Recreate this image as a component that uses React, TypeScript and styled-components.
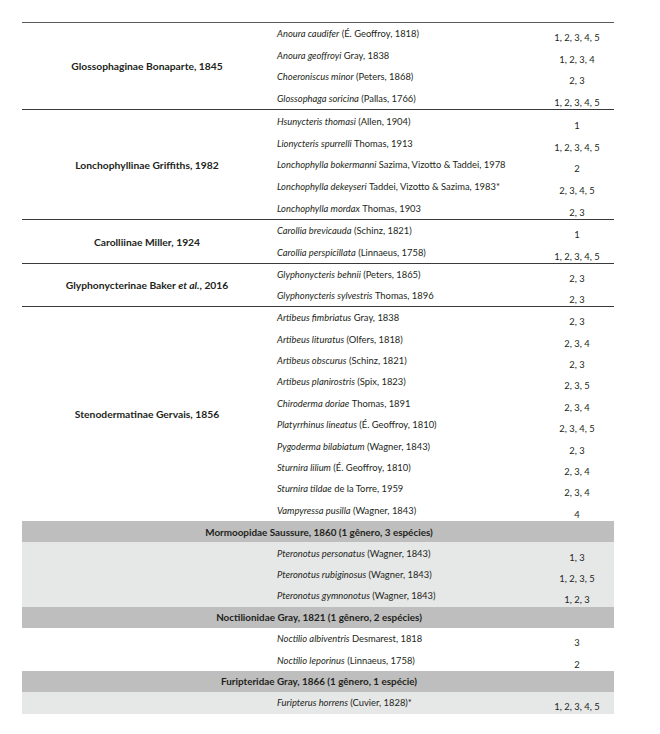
import React from 'react';
import styled, { createGlobalStyle } from 'styled-components';

const Global = createGlobalStyle`
  html, body { margin: 0; padding: 0; background: #ffffff; }
  body { font-family: Lato, "Liberation Sans", sans-serif; color: #231f20; }
`;

const Page = styled.div`
  width: 660px;
  height: 734px;
  box-sizing: border-box;
  padding: 22px 46px 0 22px;
`;

const Table = styled.div`
  width: 592px;
  border-top: 1px solid #5a5a5a;
  display: flex;
  flex-direction: column;
`;

const Group = styled.div<{ $border?: boolean; $bg?: string }>`
  display: flex;
  background: ${(p) => p.$bg ?? 'transparent'};
  border-bottom: ${(p) => (p.$border ? '1px solid #3a3a3a' : 'none')};
`;

const Subfamily = styled.div`
  flex: 0 0 250px;
  display: flex;
  align-items: center;
  justify-content: center;
  font-weight: 700;
  font-size: 10.3px;
  white-space: nowrap;
`;

const Rows = styled.div`
  flex: 1;
  display: flex;
  flex-direction: column;
`;

const Row = styled.div<{ $h: number }>`
  display: flex;
  height: ${(p) => p.$h}px;
`;

const Species = styled.div`
  flex: 1;
  display: flex;
  align-items: center;
  padding-left: 5px;
  font-size: 9.4px;
  white-space: nowrap;
  i { font-style: italic; margin-right: 0.25em; }
`;

const Dist = styled.div`
  flex: 0 0 74px;
  display: flex;
  align-items: center;
  justify-content: center;
  padding-top: 8px;
  box-sizing: border-box;
  font-size: 9.4px;
  white-space: nowrap;
`;

const FamilyHeader = styled.div`
  height: 21.4px;
  background: #bdbebd;
  display: flex;
  align-items: center;
  justify-content: center;
  padding-left: 2px;
  font-weight: 700;
  font-size: 9.9px;
  white-space: nowrap;
`;

type Sp = [string, string, string];

const SpeciesRow = ({ sp, h }: { sp: Sp; h: number }) => (
  <Row $h={h}>
    <Species>
      <i>{sp[0]}</i>
      {sp[1]}
    </Species>
    <Dist>{sp[2]}</Dist>
  </Row>
);

const subfamilies: { name: React.ReactNode; h: number; border: boolean; species: Sp[] }[] = [
  {
    name: 'Glossophaginae Bonaparte, 1845',
    h: 21.6,
    border: true,
    species: [
      ['Anoura caudifer', '(É. Geoffroy, 1818)', '1, 2, 3, 4, 5'],
      ['Anoura geoffroyi', 'Gray, 1838', '1, 2, 3, 4'],
      ['Choeroniscus minor', '(Peters, 1868)', '2, 3'],
      ['Glossophaga soricina', '(Pallas, 1766)', '1, 2, 3, 4, 5'],
    ],
  },
  {
    name: 'Lonchophyllinae Griffiths, 1982',
    h: 21.8,
    border: true,
    species: [
      ['Hsunycteris thomasi', '(Allen, 1904)', '1'],
      ['Lionycteris spurrelli', 'Thomas, 1913', '1, 2, 3, 4, 5'],
      ['Lonchophylla bokermanni', 'Sazima, Vizotto & Taddei, 1978', '2'],
      ['Lonchophylla dekeyseri', 'Taddei, Vizotto & Sazima, 1983*', '2, 3, 4, 5'],
      ['Lonchophylla mordax', 'Thomas, 1903', '2, 3'],
    ],
  },
  {
    name: 'Carolliinae Miller, 1924',
    h: 21.2,
    border: true,
    species: [
      ['Carollia brevicauda', '(Schinz, 1821)', '1'],
      ['Carollia perspicillata', '(Linnaeus, 1758)', '1, 2, 3, 4, 5'],
    ],
  },
  {
    name: (
      <>
        Glyphonycterinae Baker&nbsp;<i>et al.</i>, 2016
      </>
    ),
    h: 21.2,
    border: true,
    species: [
      ['Glyphonycteris behnii', '(Peters, 1865)', '2, 3'],
      ['Glyphonycteris sylvestris', 'Thomas, 1896', '2, 3'],
    ],
  },
  {
    name: 'Stenodermatinae Gervais, 1856',
    h: 21.4,
    border: false,
    species: [
      ['Artibeus fimbriatus', 'Gray, 1838', '2, 3'],
      ['Artibeus lituratus', '(Olfers, 1818)', '2, 3, 4'],
      ['Artibeus obscurus', '(Schinz, 1821)', '2, 3'],
      ['Artibeus planirostris', '(Spix, 1823)', '2, 3, 5'],
      ['Chiroderma doriae', 'Thomas, 1891', '2, 3, 4'],
      ['Platyrrhinus lineatus', '(É. Geoffroy, 1810)', '2, 3, 4, 5'],
      ['Pygoderma bilabiatum', '(Wagner, 1843)', '2, 3'],
      ['Sturnira lilium', '(É. Geoffroy, 1810)', '2, 3, 4'],
      ['Sturnira tildae', 'de la Torre, 1959', '2, 3, 4'],
      ['Vampyressa pusilla', '(Wagner, 1843)', '4'],
    ],
  },
];

const families: { name: string; bg: string; species: Sp[] }[] = [
  {
    name: 'Mormoopidae Saussure, 1860 (1 gênero, 3 espécies)',
    bg: '#e6e7e7',
    species: [
      ['Pteronotus personatus', '(Wagner, 1843)', '1, 3'],
      ['Pteronotus rubiginosus', '(Wagner, 1843)', '1, 2, 3, 5'],
      ['Pteronotus gymnonotus', '(Wagner, 1843)', '1, 2, 3'],
    ],
  },
  {
    name: 'Noctilionidae Gray, 1821 (1 gênero, 2 espécies)',
    bg: '#ffffff',
    species: [
      ['Noctilio albiventris', 'Desmarest, 1818', '3'],
      ['Noctilio leporinus', '(Linnaeus, 1758)', '2'],
    ],
  },
  {
    name: 'Furipteridae Gray, 1866 (1 gênero, 1 espécie)',
    bg: '#e6e7e7',
    species: [['Furipterus horrens', '(Cuvier, 1828)*', '1, 2, 3, 4, 5']],
  },
];

export default function App() {
  return (
    <Page>
      <Global />
      <Table>
        {subfamilies.map((g, i) => (
          <Group key={i} $border={g.border}>
            <Subfamily>{g.name}</Subfamily>
            <Rows>
              {g.species.map((sp) => (
                <SpeciesRow key={sp[0]} sp={sp} h={g.h} />
              ))}
            </Rows>
          </Group>
        ))}
        {families.map((f) => (
          <React.Fragment key={f.name}>
            <FamilyHeader>{f.name}</FamilyHeader>
            <Group $bg={f.bg}>
              <Subfamily />
              <Rows>
                {f.species.map((sp) => (
                  <SpeciesRow key={sp[0]} sp={sp} h={21.4} />
                ))}
              </Rows>
            </Group>
          </React.Fragment>
        ))}
      </Table>
    </Page>
  );
}
